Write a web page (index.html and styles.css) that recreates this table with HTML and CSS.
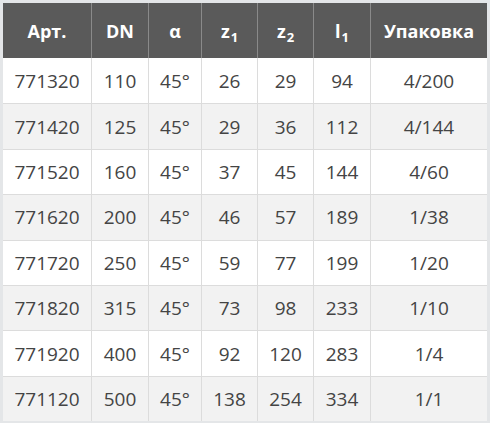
FILE: index.html
```html
<!DOCTYPE html>
<html>
<head>
<meta charset="utf-8">
<link rel="stylesheet" href="styles.css">
</head>
<body>
<table class="spec">
<colgroup>
<col class="c1"><col class="c2"><col class="c3"><col class="c4"><col class="c5"><col class="c6"><col class="c7">
</colgroup>
<thead>
<tr><th>Арт.</th><th>DN</th><th>α</th><th>z<span class="sub">1</span></th><th>z<span class="sub">2</span></th><th>l<span class="sub">1</span></th><th>Упаковка</th></tr>
</thead>
<tbody>
<tr><td>771320</td><td>110</td><td>45°</td><td>26</td><td>29</td><td>94</td><td>4/200</td></tr>
<tr><td>771420</td><td>125</td><td>45°</td><td>29</td><td>36</td><td>112</td><td>4/144</td></tr>
<tr><td>771520</td><td>160</td><td>45°</td><td>37</td><td>45</td><td>144</td><td>4/60</td></tr>
<tr><td>771620</td><td>200</td><td>45°</td><td>46</td><td>57</td><td>189</td><td>1/38</td></tr>
<tr><td>771720</td><td>250</td><td>45°</td><td>59</td><td>77</td><td>199</td><td>1/20</td></tr>
<tr><td>771820</td><td>315</td><td>45°</td><td>73</td><td>98</td><td>233</td><td>1/10</td></tr>
<tr><td>771920</td><td>400</td><td>45°</td><td>92</td><td>120</td><td>283</td><td>1/4</td></tr>
<tr><td>771120</td><td>500</td><td>45°</td><td>138</td><td>254</td><td>334</td><td>1/1</td></tr>
</tbody>
</table>
</body>
</html>
```
FILE: styles.css
```css
html, body {
  margin: 0;
  padding: 0;
  background: #ffffff;
}
.spec {
  width: 490px;
  table-layout: fixed;
  border-collapse: separate;
  border-spacing: 0;
  border: 3px solid #e4e6e8;
  font-family: "Open Sans", "DejaVu Sans", sans-serif;
}
.c1 { width: 89px; }
.c2 { width: 57px; }
.c3 { width: 53px; }
.c4 { width: 56px; }
.c5 { width: 56px; }
.c6 { width: 57px; }
.c7 { width: 116px; }
.spec th, .spec td {
  padding: 0;
  text-align: center;
  vertical-align: middle;
  box-sizing: border-box;
}
.spec th {
  height: 55px;
  background: #5a5a5a;
  color: #ffffff;
  font-size: 18px;
  font-weight: 700;
  border-right: 1px solid #8a8a8a;
}
.spec td {
  height: 45.4px;
  color: #444444;
  font-size: 19px;
  border-right: 1px solid #dcdcdc;
  border-top: 1px solid #dcdcdc;
}
.spec tbody tr:first-child td { border-top: none; }
.spec th:last-child, .spec td:last-child { border-right: none; }
.spec tbody tr:nth-child(even) td { background: #f2f2f2; }
.sub {
  font-size: 13px;
  position: relative;
  top: 4px;
  margin-left: 1px;
}
```
